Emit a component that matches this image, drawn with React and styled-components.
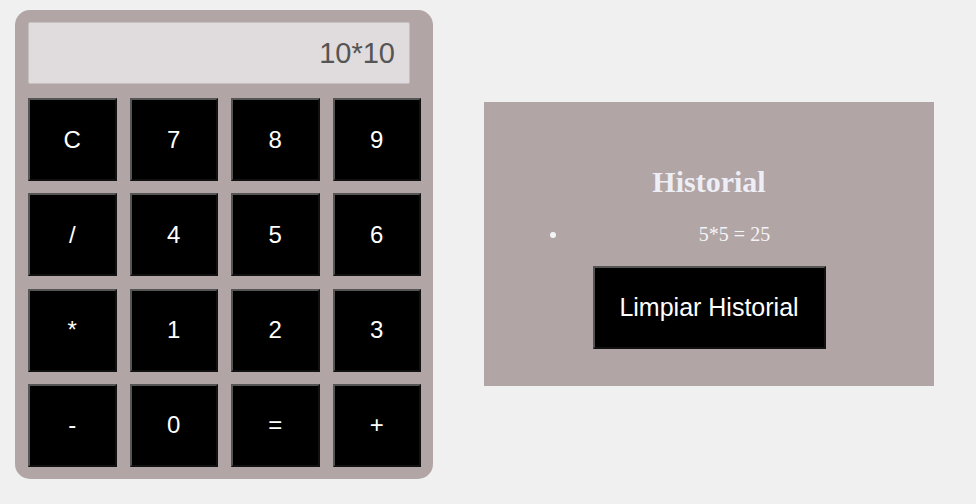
import React, { useState } from "react";
import styled, { createGlobalStyle } from "styled-components";

const GlobalStyle = createGlobalStyle`
  html, body {
    margin: 0;
    padding: 0;
    background: #f0f0f0;
  }
`;

const keys = ["C", "7", "8", "9", "/", "4", "5", "6", "*", "1", "2", "3", "-", "0", "=", "+"];

export default function App() {
  const [display] = useState("10*10");
  const [history] = useState(["5*5 = 25"]);

  return (
    <>
      <GlobalStyle />
      <Page>
        <Calculator>
          <Display>{display}</Display>
          <Keypad>
            {keys.map((k) => (
              <Key key={k}>{k}</Key>
            ))}
          </Keypad>
        </Calculator>

        <HistoryPanel>
          <Title>Historial</Title>
          <HistoryList>
            {history.map((h) => (
              <li key={h}>{h}</li>
            ))}
          </HistoryList>
          <ClearButton>Limpiar Historial</ClearButton>
        </HistoryPanel>
      </Page>
    </>
  );
}

const Page = styled.div`
  display: flex;
  align-items: center;
  gap: 51px;
  padding: 10px 15px;
`;

const Calculator = styled.div`
  width: 418px;
  box-sizing: border-box;
  padding: 12px 12px 12px 13px;
  border-radius: 15px;
  background-color: #b2a5a5;
  display: flex;
  flex-direction: column;
  gap: 14px;
`;

const Display = styled.div`
  width: 382px;
  height: 62px;
  box-sizing: border-box;
  border: 1px solid #c9c1c1;
  border-radius: 2px;
  background-color: #e0dcdd;
  padding-right: 14px;
  display: flex;
  align-items: center;
  justify-content: flex-end;
  font-family: "Liberation Sans", Arial, sans-serif;
  font-size: 29px;
  color: #555;
`;

const Keypad = styled.div`
  display: grid;
  grid-template-columns: repeat(4, 1fr);
  grid-auto-rows: 83px;
  column-gap: 13px;
  row-gap: 12.33px;
`;

const Key = styled.button`
  box-sizing: border-box;
  margin: 0;
  border: 2px solid;
  border-color: #555 #111 #111 #555;
  background-color: #000;
  color: #fff;
  font-family: "Liberation Sans", Arial, sans-serif;
  font-size: 24px;
  cursor: pointer;
`;

const HistoryPanel = styled.div`
  width: 450px;
  height: 284px;
  box-sizing: border-box;
  background-color: #b2a5a5;
  display: flex;
  flex-direction: column;
  align-items: center;
  padding-top: 63px;
`;

const Title = styled.h2`
  margin: 0;
  font-family: "Liberation Serif", "Times New Roman", serif;
  font-size: 30px;
  font-weight: 700;
  line-height: 34px;
  color: #eeeef6;
`;

const HistoryList = styled.ul`
  align-self: stretch;
  margin: 24px 34px 0 45px;
  padding-left: 40px;
  font-family: "Liberation Serif", "Times New Roman", serif;
  font-size: 20px;
  line-height: 23px;
  color: #f4f4f8;
  text-align: center;
`;

const ClearButton = styled.button`
  margin-top: 20px;
  width: 233px;
  height: 83px;
  box-sizing: border-box;
  border: 2px solid;
  border-color: #555 #111 #111 #555;
  background-color: #000;
  color: #fff;
  font-family: "Liberation Sans", Arial, sans-serif;
  font-size: 25px;
  cursor: pointer;
`;
